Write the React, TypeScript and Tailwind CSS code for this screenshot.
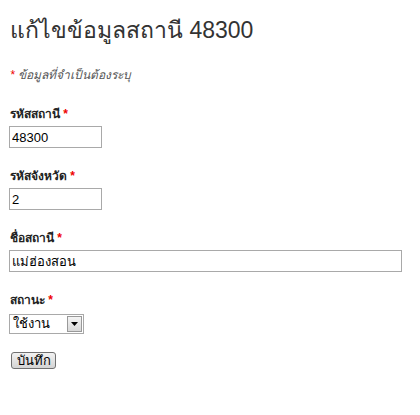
const fields = [
  { label: "รหัสสถานี", value: "48300", width: "w-[93px]" },
  { label: "รหัสจังหวัด", value: "2", width: "w-[93px]" },
  { label: "ชื่อสถานี", value: "แม่ฮ่องสอน", width: "w-[393px]" },
];

function Label({ text, className }: { text: string; className: string }) {
  return (
    <div className={`h-[16px] text-[12px] font-bold text-[#222] leading-[20px] pl-[1px] ${className}`}>
      {text} <span className="text-[#e00]">*</span>
    </div>
  );
}

export default function App() {
  return (
    <div className="w-[420px] h-[415px] bg-white px-[9px] pt-[14px] flex flex-col items-start font-['Tahoma','Liberation_Sans',sans-serif]">
      <h1 className="h-[32px] text-[23px] font-light text-[#333] leading-[32px] pl-[1px]">
        แก้ไขข้อมูลสถานี 48300
      </h1>

      <p className="mt-[21px] h-[16px] text-[12px] italic text-[#555] leading-[16px] pl-[1px]">
        <span className="text-[#e00]">*</span> ข้อมูลที่จำเป็นต้องระบุ
      </p>

      {fields.map((f, i) => (
        <div key={f.label} className={i === 0 ? "mt-[21px]" : "mt-[18px]"}>
          <Label text={f.label} className="" />
          <input
            readOnly
            value={f.value}
            className={`${f.width} mt-[6px] block h-[22px] border border-[#a9a9a9] px-[2px] text-[13px] text-black font-['Tahoma','Liberation_Sans',sans-serif] outline-none`}
          />
        </div>
      ))}

      <Label text="สถานะ" className="mt-[18px]" />
      <div className="mt-[8px] w-[75px] h-[20px] border border-[#a9a9a9] flex items-center justify-between pl-[3px] pr-[1px] text-[13px] text-black">
        <span>ใช้งาน</span>
        <span className="w-[15px] h-[16px] border border-[#999] bg-gradient-to-b from-[#f4f4f4] to-[#d8d8d8] flex items-center justify-center">
          <svg width="7" height="4" viewBox="0 0 7 4">
            <path d="M0 0h7L3.5 4z" fill="#000" />
          </svg>
        </span>
      </div>

      <button className="mt-[18px] ml-[2px] h-[17px] w-[45px] border border-[#707070] rounded-[3px] bg-gradient-to-b from-[#f2f2f2] to-[#d4d4d4] text-[13px] leading-[14px] text-black">
        บันทึก
      </button>
    </div>
  );
}
